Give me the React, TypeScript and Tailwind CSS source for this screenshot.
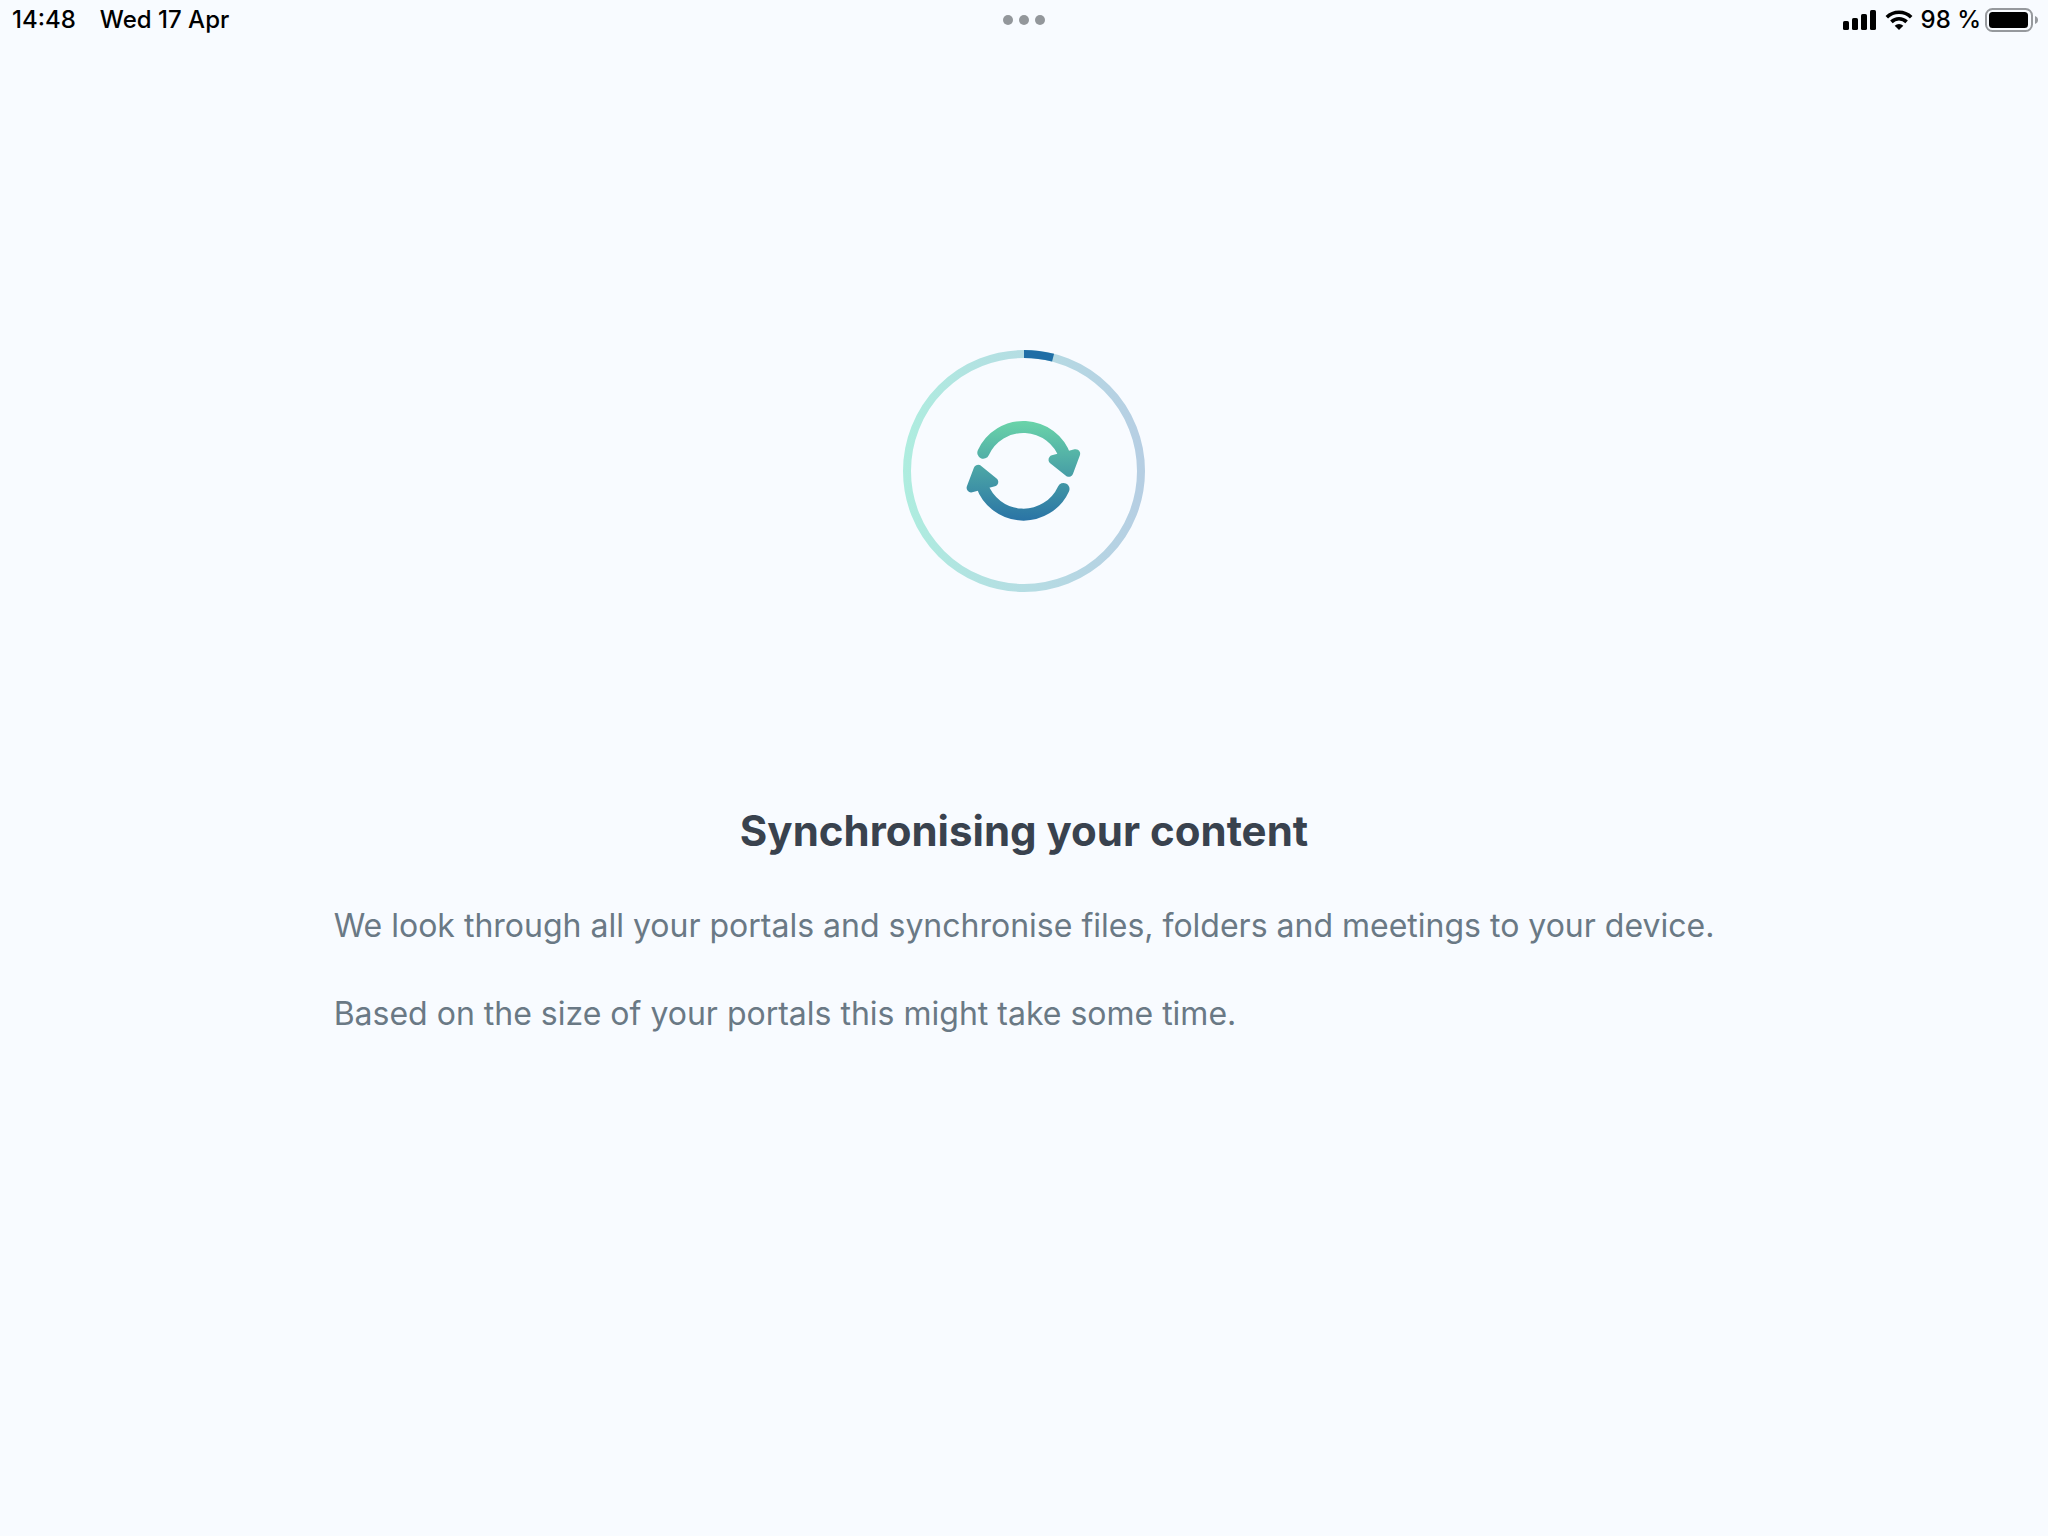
import { useState } from 'react'

const RADIUS = 117
const CIRCUMFERENCE = 2 * Math.PI * RADIUS

function SignalIcon() {
  return (
    <svg viewBox="0 0 34 20" className="h-5 w-[34px]" fill="#000" aria-hidden="true">
      <rect x="0" y="11" width="6" height="9" rx="1.6" />
      <rect x="9" y="8" width="6" height="12" rx="1.6" />
      <rect x="18" y="4" width="6" height="16" rx="1.6" />
      <rect x="27" y="0" width="6" height="20" rx="1.6" />
    </svg>
  )
}

function WifiIcon() {
  return (
    <svg viewBox="0 0 28 20" className="h-5 w-7" fill="none" aria-hidden="true">
      <path d="M1.8 7.2a17.4 17.4 0 0 1 24.4 0" stroke="#000" strokeWidth="3.6" />
      <path d="M6.4 11.9a10.9 10.9 0 0 1 15.2 0" stroke="#000" strokeWidth="3.6" />
      <path d="M14 20l-4.3-4.3a6.2 6.2 0 0 1 8.6 0z" fill="#000" />
    </svg>
  )
}

function BatteryIcon() {
  return (
    <svg viewBox="0 0 53 24" className="h-6 w-[53px]" fill="none" aria-hidden="true">
      <rect x="1" y="1" width="46" height="22" rx="6.5" stroke="#96999d" strokeWidth="2" />
      <rect x="4" y="4" width="39" height="16" rx="3.5" fill="#000" />
      <path d="M50 8c4 1.2 4 6.8 0 8z" fill="#96999d" />
    </svg>
  )
}

function StatusBar() {
  return (
    <header className="grid h-10 grid-cols-3 items-center px-[10px] text-2xl font-medium text-black">
      <div className="flex gap-6 pl-0.5">
        <span>14:48</span>
        <span>Wed 17 Apr</span>
      </div>
      <div className="flex justify-center gap-[6px]">
        <span className="h-[10px] w-[10px] rounded-full bg-[#93979b]" />
        <span className="h-[10px] w-[10px] rounded-full bg-[#93979b]" />
        <span className="h-[10px] w-[10px] rounded-full bg-[#93979b]" />
      </div>
      <div className="flex items-center justify-end gap-2">
        <SignalIcon />
        <WifiIcon />
        <div className="flex items-center gap-1">
          <span>98 %</span>
          <BatteryIcon />
        </div>
      </div>
    </header>
  )
}

function SyncProgress({ progress }: { progress: number }) {
  return (
    <svg
      viewBox="0 0 242 242"
      className="h-[242px] w-[242px]"
      fill="none"
      role="progressbar"
      aria-label="Synchronising"
      aria-valuenow={progress}
      aria-valuemin={0}
      aria-valuemax={100}
    >
      <defs>
        <linearGradient id="track" gradientUnits="userSpaceOnUse" x1="0" y1="0" x2="242" y2="0">
          <stop offset="0" stopColor="#aeeddf" />
          <stop offset="0.25" stopColor="#b1e4e1" />
          <stop offset="0.5" stopColor="#b5dde3" />
          <stop offset="1" stopColor="#b6cee3" />
        </linearGradient>
        <linearGradient id="arrows" gradientUnits="userSpaceOnUse" x1="0" y1="71" x2="0" y2="170">
          <stop offset="0" stopColor="#6ad4a9" />
          <stop offset="0.5" stopColor="#4aa3a6" />
          <stop offset="1" stopColor="#2a74a5" />
        </linearGradient>
      </defs>

      <circle cx="121" cy="121" r={RADIUS} stroke="url(#track)" strokeWidth="8" />
      <circle
        cx="121"
        cy="121"
        r={RADIUS}
        stroke="#1f6ea6"
        strokeWidth="8"
        strokeDasharray={`${(CIRCUMFERENCE * progress) / 100} ${CIRCUMFERENCE}`}
        transform="rotate(-90 121 121)"
      />

      <g stroke="url(#arrows)" strokeLinecap="round" strokeLinejoin="round">
        <path d="M80.3 102.7A44 44 0 0 1 162 106.8" strokeWidth="12" />
        <path d="M150 109.7L172.7 103.7L165.7 122.3Z" fill="url(#arrows)" strokeWidth="9" />
        <path d="M160.5 138.9A44 44 0 0 1 78.8 134.8" strokeWidth="12" />
        <path d="M90.8 131.9L68.1 137.9L75.1 119.3Z" fill="url(#arrows)" strokeWidth="9" />
      </g>
    </svg>
  )
}

export default function App() {
  const [progress] = useState(4)

  return (
    <div className="min-h-screen bg-[#f8fbff] font-['Inter',sans-serif]">
      <StatusBar />
      <main className="flex flex-col items-center px-8 pt-[310px]">
        <SyncProgress progress={progress} />
        <h1 className="mt-[212px] text-[42px] leading-[54px] font-bold text-[#39424e]">
          Synchronising your content
        </h1>
        <div className="mt-12 flex flex-col gap-12 text-[32px] leading-10 text-[#6a7985]">
          <p>We look through all your portals and synchronise files, folders and meetings to your device.</p>
          <p>Based on the size of your portals this might take some time.</p>
        </div>
      </main>
    </div>
  )
}
